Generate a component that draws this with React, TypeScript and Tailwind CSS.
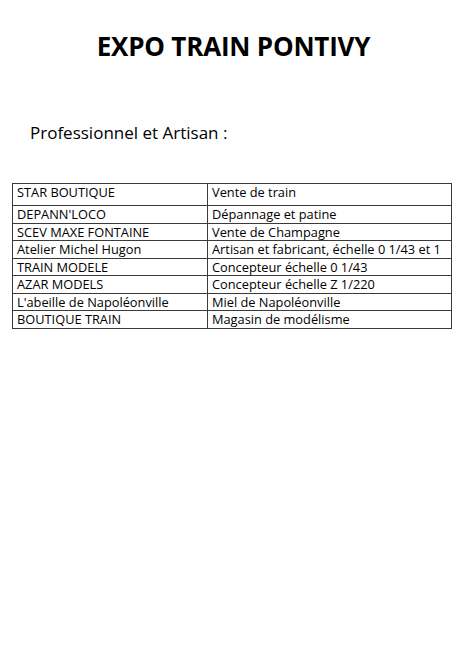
const rows: [string, string][] = [
  ["STAR BOUTIQUE", "Vente de train"],
  ["DEPANN'LOCO", "Dépannage et patine"],
  ["SCEV MAXE FONTAINE", "Vente de Champagne"],
  ["Atelier Michel Hugon", "Artisan et fabricant, échelle 0 1/43 et 1"],
  ["TRAIN MODELE", "Concepteur échelle 0 1/43"],
  ["AZAR MODELS", "Concepteur échelle Z 1/220"],
  ["L'abeille de Napoléonville", "Miel de Napoléonville"],
  ["BOUTIQUE TRAIN", "Magasin de modélisme"],
];

export default function App() {
  return (
    <div
      className="w-[467px] h-[660px] bg-white text-black"
      style={{ fontFamily: '"Open Sans", Arial, sans-serif' }}
    >
      <div className="pt-[30px]">
        <h1 className="text-center text-[26px] leading-[32px] font-bold tracking-[-0.2px]">
          EXPO TRAIN PONTIVY
        </h1>
        <p className="mt-[60px] ml-[30px] text-[17px] leading-[22px]">
          Professionnel et Artisan :
        </p>
      </div>
      <div className="mt-[39px] ml-[12px] w-[440px] border border-[#3a3a3a] text-[12.8px]">
        {rows.map(([a, b], i) => (
          <div
            key={a}
            className={
              "grid grid-cols-[195px_1fr] " +
              (i === 0 ? "h-[21px] " : "h-[17.5px] border-t border-[#3a3a3a] ")
            }
          >
            <div className="pl-[4px] border-r border-[#3a3a3a] leading-[16px]">{a}</div>
            <div className="pl-[4px] leading-[16px]">{b}</div>
          </div>
        ))}
      </div>
    </div>
  );
}
